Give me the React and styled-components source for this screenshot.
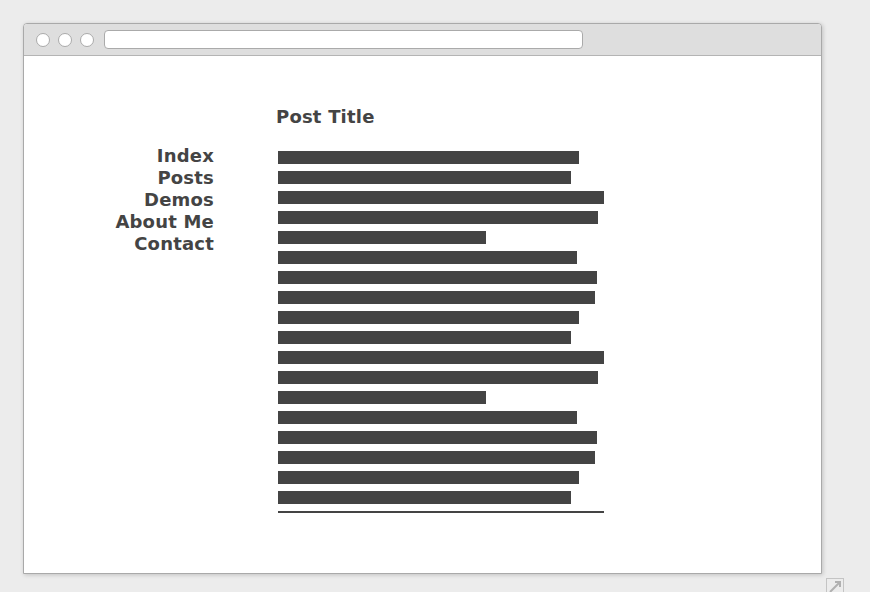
import React from "react";
import styled, { createGlobalStyle } from "styled-components";

const GlobalStyle = createGlobalStyle`
  html, body {
    margin: 0;
    padding: 0;
    background: #ececec;
    overflow: hidden;
  }
  body {
    font-family: "DejaVu Sans", "Liberation Sans", sans-serif;
  }
`;

const Page = styled.div`
  padding: 23px 0 0 23px;
  display: flex;
  flex-direction: column;
  width: 822px;
`;

const Window = styled.div`
  width: 797px;
  height: 549px;
  border: 1px solid #a9a9a9;
  border-radius: 4px 4px 0 0;
  background: #fff;
  box-shadow: 1px 1px 4px rgba(0, 0, 0, 0.18);
  display: flex;
  flex-direction: column;
  overflow: hidden;
`;

const TitleBar = styled.div`
  flex-shrink: 0;
  background: #dedede;
  border-bottom: 1px solid #b4b4b4;
  display: flex;
  align-items: center;
  padding-left: 12px;
  gap: 8px;
  box-sizing: border-box;
  height: 32px;
`;

const Dot = styled.span`
  width: 12px;
  height: 12px;
  border-radius: 50%;
  border: 1px solid #aaa;
  background: #fff;
  flex-shrink: 0;
`;

const UrlBar = styled.div`
  margin-left: 2px;
  width: 477px;
  height: 17px;
  border: 1px solid #aaa;
  border-radius: 4px;
  background: #fff;
`;

const Content = styled.div`
  display: flex;
  color: #444;
  font-weight: bold;
  font-size: 18px;
  line-height: 22px;
  letter-spacing: 0.2px;
`;

const Nav = styled.nav`
  width: 190px;
  padding-top: 89px;
  text-align: right;
  display: flex;
  flex-direction: column;
`;

const NavItem = styled.span`
  display: block;
`;

const Main = styled.main`
  margin-left: 63px;
  padding-top: 50px;
  display: flex;
  flex-direction: column;
`;

const Title = styled.h1`
  margin: 0 0 0 -1px;
  font-size: 18px;
  line-height: 22px;
`;

const Lines = styled.div`
  margin-top: 23px;
  margin-left: 1px;
  display: flex;
  flex-direction: column;
  gap: 7px;
`;

const Line = styled.div`
  height: 13px;
  background: #444;
`;

const Rule = styled.div`
  width: 326px;
  height: 2px;
  background: #444;
`;

const Footer = styled.div`
  display: flex;
  justify-content: flex-end;
  padding-top: 4px;
`;

const ResizeIcon = () => (
  <svg width="19" height="16" viewBox="0 0 19 16">
    <rect x="0.5" y="0.5" width="17" height="17" fill="none" stroke="#c4c4c4" />
    <path d="M4 14 L14 4" stroke="#b0b0b0" strokeWidth="2" />
    <path d="M9 4 H14 V9" stroke="#b0b0b0" strokeWidth="2" fill="none" />
  </svg>
);

const navItems = ["Index", "Posts", "Demos", "About Me", "Contact"];
const widths = [
  301, 293, 326, 320, 208, 299, 319, 317, 301, 293, 326, 320, 208, 299, 319,
  317, 301, 293,
];

export default function App() {
  return (
    <>
      <GlobalStyle />
      <Page>
        <Window>
          <TitleBar>
            <Dot />
            <Dot />
            <Dot />
            <UrlBar />
          </TitleBar>
          <Content>
            <Nav>
              {navItems.map((item) => (
                <NavItem key={item}>{item}</NavItem>
              ))}
            </Nav>
            <Main>
              <Title>Post Title</Title>
              <Lines>
                {widths.map((w, i) => (
                  <Line key={i} style={{ width: w }} />
                ))}
                <Rule />
              </Lines>
            </Main>
          </Content>
        </Window>
        <Footer>
          <ResizeIcon />
        </Footer>
      </Page>
    </>
  );
}
